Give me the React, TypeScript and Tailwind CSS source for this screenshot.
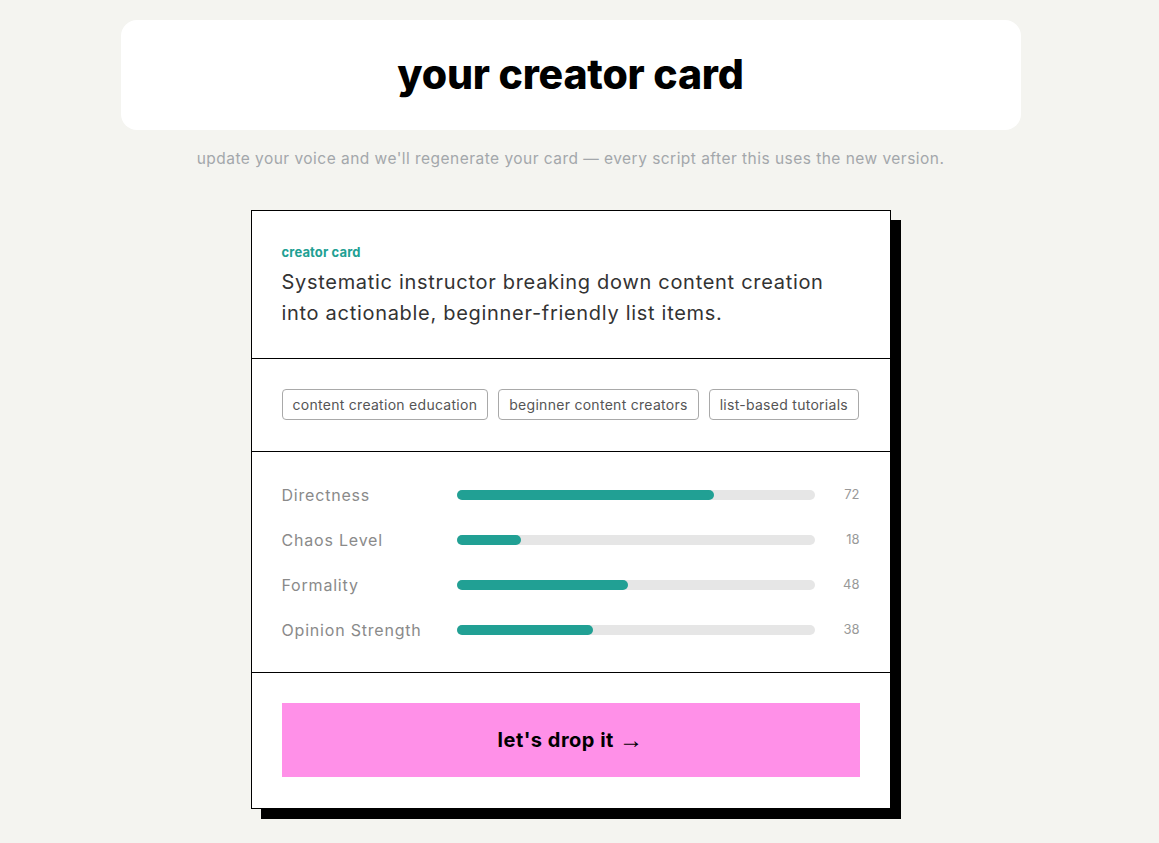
const traits = [
  { label: "Directness", value: 72 },
  { label: "Chaos Level", value: 18 },
  { label: "Formality", value: 48 },
  { label: "Opinion Strength", value: 38 },
];

const tags = ["content creation education", "beginner content creators", "list-based tutorials"];

export default function App() {
  return (
    <div className="min-h-screen bg-[#f4f4f0] pt-5 pb-6 pr-[18px] font-['Inter',sans-serif]">
      <div className="mx-auto flex h-[110px] w-[900px] items-center justify-center rounded-2xl bg-white">
        <h1 className="text-[41px] font-extrabold tracking-[-0.005em] text-black">your creator card</h1>
      </div>
      <p className="mt-[17px] text-center text-[15.5px] tracking-[0.03em] text-[#a3a7ab]">
        update your voice and we'll regenerate your card — every script after this uses the new version.
      </p>

      <div className="mx-auto mt-[40px] w-[640px] border border-black bg-white shadow-[10px_10px_0_0_#000]">
        <section className="border-b border-black px-[30px] pt-[32px] pb-[29px]">
          <div className="text-[13px] font-bold tracking-[0.01em] text-[#21a093]">creator card</div>
          <p className="mt-[4px] text-[20px] leading-[31px] tracking-[0.035em] text-[#333]">
            Systematic instructor breaking down content creation into actionable, beginner-friendly list items.
          </p>
        </section>

        <section className="flex gap-[10px] border-b border-black px-[30px] pt-[30px] pb-[31px]">
          {tags.map((t) => (
            <span
              key={t}
              className="flex h-[31px] items-center rounded-[4px] border border-[#a9a9a9] px-[10px] text-[14px] tracking-[0.02em] text-[#555]"
            >
              {t}
            </span>
          ))}
        </section>

        <section className="flex flex-col gap-[21px] border-b border-black px-[30px] pt-[31px] pb-[30px]">
          {traits.map((t) => (
            <div key={t.label} className="grid h-[24px] grid-cols-[175px_1fr_45px] items-center">
              <span className="text-[16px] tracking-[0.05em] text-[#8a8a8a]">{t.label}</span>
              <div className="h-[10px] rounded-full bg-[#e6e6e6]">
                <div className="h-full rounded-full bg-[#21a094]" style={{ width: `${t.value}%` }} />
              </div>
              <span className="text-right text-[13px] text-[#999]">{t.value}</span>
            </div>
          ))}
        </section>

        <section className="px-[30px] pt-[30px] pb-[31px]">
          <button className="flex h-[74px] w-full items-center justify-center gap-[5px] bg-[#ff90e8] text-[20px] font-bold tracking-[0.025em] text-black">
            let's drop it
            <span className="font-['Liberation_Sans',sans-serif] text-[24px] font-normal">→</span>
          </button>
        </section>
      </div>
    </div>
  );
}
